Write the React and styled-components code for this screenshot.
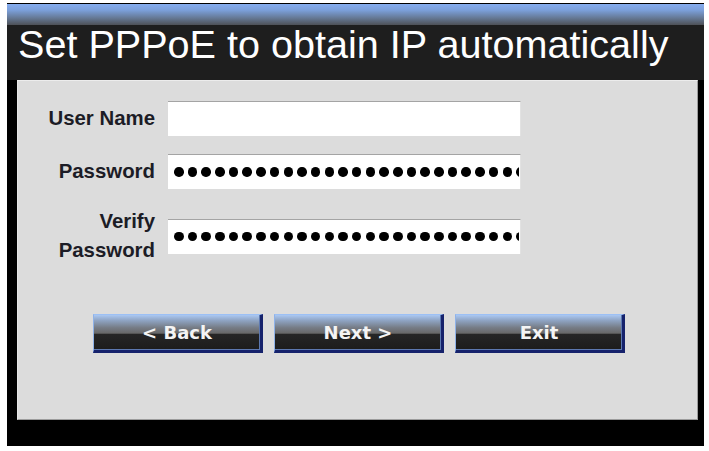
import React from "react";
import styled, { createGlobalStyle } from "styled-components";

const GlobalStyle = createGlobalStyle`
  html, body {
    margin: 0;
    padding: 0;
    background: #ffffff;
  }
`;

const Frame = styled.div`
  margin: 3px 0 0 7px;
  width: 697px;
  height: 443px;
  background: #000;
  padding-top: 1px;
  box-sizing: border-box;
  display: flex;
  flex-direction: column;
`;

const TopBar = styled.div`
  height: 21px;
  background: linear-gradient(to bottom, #86adef 0%, #7b9fd9 30%, #667a98 65%, #4e5157 100%);
`;

const TitleBar = styled.div`
  height: 55px;
  background: #1e1e1e;
  padding-left: 11px;
`;

const Title = styled.h1`
  margin: 0;
  font-family: "Liberation Sans", Arial, sans-serif;
  font-weight: 400;
  font-size: 39.6px;
  line-height: 38px;
  color: #ffffff;
  white-space: nowrap;
`;

const Panel = styled.div`
  margin: 0 6px 0 10px;
  height: 340px;
  box-sizing: border-box;
  background: #dcdcdc;
  border-top: 1px solid #ececec;
  border-left: 1px solid #e6e6e6;
  border-right: 1px solid #9c9c9c;
  border-bottom: 1px solid #9c9c9c;
  padding-top: 20px;
`;

const Form = styled.div`
  display: grid;
  grid-template-columns: 137px 353px;
  column-gap: 13px;
  row-gap: 18px;
  align-items: center;
`;

const Label = styled.div`
  text-align: right;
  font-family: "Liberation Sans", Arial, sans-serif;
  font-weight: 700;
  font-size: 20.4px;
  line-height: 29px;
  color: #1c1c26;
`;

const Field = styled.div`
  height: 35px;
  box-sizing: border-box;
  background: #ffffff;
  border-top: 1px solid #a4a4a4;
  border-right: 1px solid #e2e2e2;
  display: flex;
  align-items: center;
  padding-left: 6px;
`;

const Mask = styled.div`
  width: 345px;
  overflow: hidden;
  display: flex;
  gap: 4.2px;
`;

const Dot = styled.span`
  flex: none;
  width: 9.5px;
  height: 9.5px;
  border-radius: 50%;
  background: #000;
`;

const ButtonRow = styled.div`
  display: flex;
  gap: 11px;
  padding-left: 75px;
  margin-top: 49px;
`;

const Button = styled.button`
  width: 170px;
  height: 39px;
  box-sizing: border-box;
  padding: 0;
  border-style: solid;
  border-width: 1px 3px 3px 1px;
  border-color: #9cc0f5 #16226c #16226c #8fb2e8;
  box-shadow: inset 0 -1px 0 #5c78b0, inset -1px 0 0 #5c78b0;
  background: linear-gradient(
    to bottom,
    #abc8f2 0%,
    #8ea3c2 16%,
    #767c86 36%,
    #686868 52%,
    #262626 55%,
    #1c1c1c 100%
  );
  font-family: "DejaVu Sans", Verdana, sans-serif;
  font-weight: 700;
  font-size: 18px;
  color: #f4f4f4;
  cursor: pointer;
`;

const Dots = ({ count = 27 }) => (
  <Mask>
    {Array.from({ length: count }).map((_, i) => (
      <Dot key={i} />
    ))}
  </Mask>
);

const App = () => {
  return (
    <>
      <GlobalStyle />
      <Frame>
        <TopBar />
        <TitleBar>
          <Title>Set PPPoE to obtain IP automatically</Title>
        </TitleBar>
        <Panel>
          <Form>
            <Label>User Name</Label>
            <Field />
            <Label>Password</Label>
            <Field>
              <Dots />
            </Field>
            <Label>
              Verify
              <br />
              Password
            </Label>
            <Field>
              <Dots />
            </Field>
          </Form>
          <ButtonRow>
            <Button>&lt; Back</Button>
            <Button>Next &gt;</Button>
            <Button>Exit</Button>
          </ButtonRow>
        </Panel>
      </Frame>
    </>
  );
};

export default App;
